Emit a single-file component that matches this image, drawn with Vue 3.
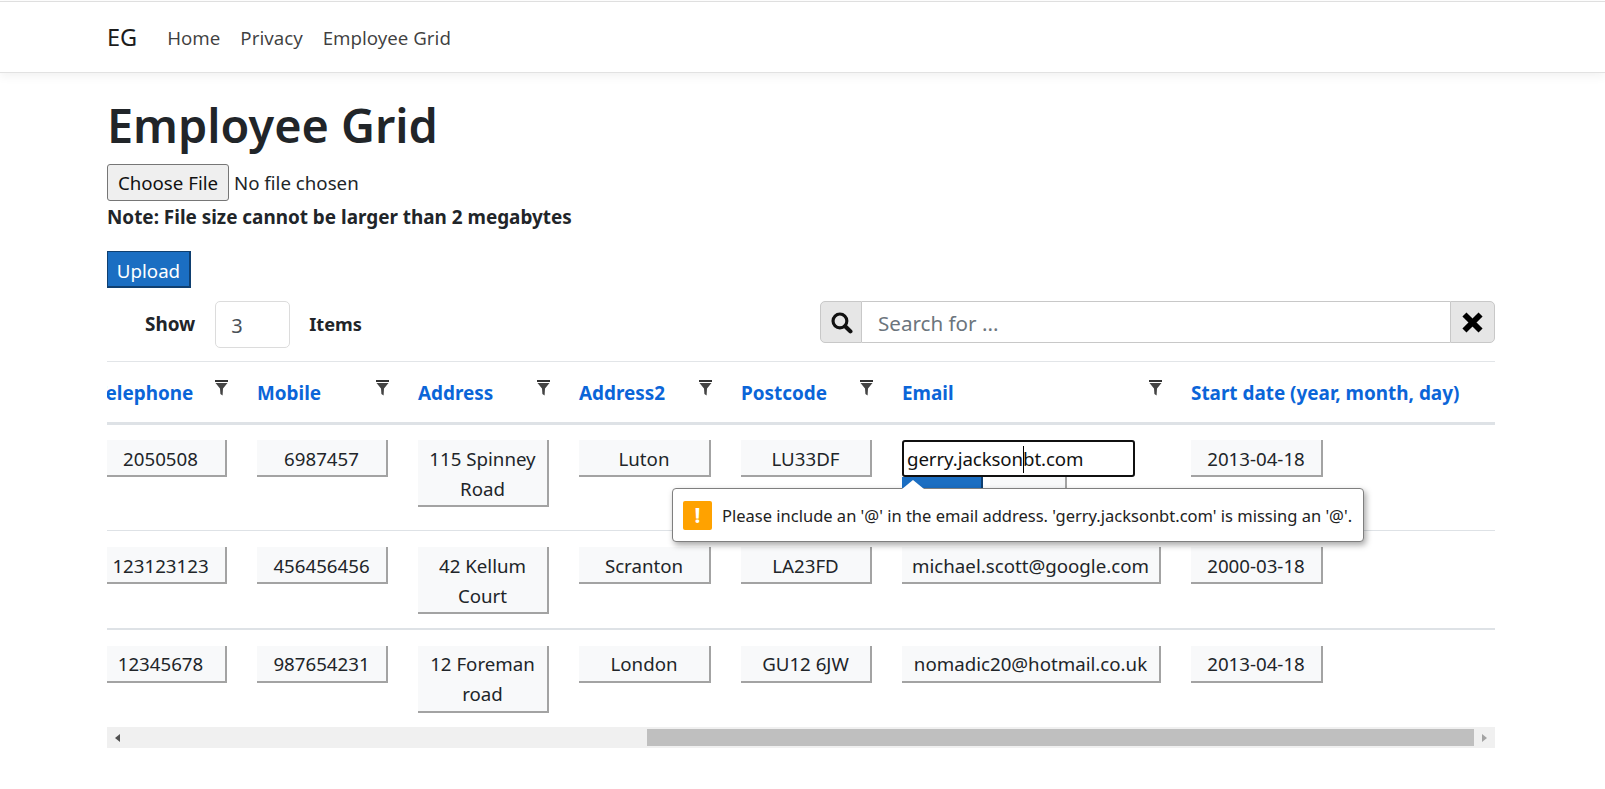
<script setup>
const columns = [
  { title: 'Telephone', width: 161, filter: true },
  { title: 'Mobile', width: 161, filter: true },
  { title: 'Address', width: 161, filter: true },
  { title: 'Address2', width: 162, filter: true },
  { title: 'Postcode', width: 161, filter: true },
  { title: 'Email', width: 289, filter: true },
  { title: 'Start date (year, month, day)', width: 319, filter: false }
]
const rows = [
  { tel: '2050508', mob: '6987457', addr: '115 Spinney Road', addr2: 'Luton', post: 'LU33DF', email: '', date: '2013-04-18', editing: true },
  { tel: '123123123', mob: '456456456', addr: '42 Kellum Court', addr2: 'Scranton', post: 'LA23FD', email: 'michael.scott@google.com', date: '2000-03-18' },
  { tel: '12345678', mob: '987654231', addr: '12 Foreman road', addr2: 'London', post: 'GU12 6JW', email: 'nomadic20@hotmail.co.uk', date: '2013-04-18' }
]
</script>

<template>
  <div class="page">
    <nav class="nav">
      <a class="brand">EG</a>
      <a class="link">Home</a>
      <a class="link">Privacy</a>
      <a class="link">Employee Grid</a>
    </nav>
    <main class="main">
      <h1 class="title">Employee Grid</h1>
      <div class="file-row">
        <span class="file-btn">Choose File</span>
        <span class="file-name">No file chosen</span>
      </div>
      <p class="note">Note: File size cannot be larger than 2 megabytes</p>
      <span class="upload">Upload</span>
      <div class="toolbar">
        <div class="show">
          <b>Show</b>
          <span class="count">3</span>
          <b class="items">Items</b>
        </div>
        <div class="search">
          <span class="addon addon-left">
            <svg width="23" height="23" viewBox="0 0 22 22"><circle cx="9.5" cy="9.5" r="6.6" fill="none" stroke="#111" stroke-width="3"/><path d="M14.5 14.5l5 5" stroke="#111" stroke-width="4" stroke-linecap="round"/></svg>
          </span>
          <span class="search-input">Search for ...</span>
          <span class="addon addon-right">
            <svg width="23" height="23" viewBox="0 0 20 20"><path d="M3 3l14 14M17 3L3 17" stroke="#000" stroke-width="5"/></svg>
          </span>
        </div>
      </div>
      <div class="grid-wrap">
        <table class="grid">
          <colgroup>
            <col v-for="c in columns" :key="c.title" :style="{ width: c.width + 'px' }">
          </colgroup>
          <thead>
            <tr>
              <th v-for="c in columns" :key="c.title">
                <div class="th-inner">
                  <span class="th-label">{{ c.title }}</span>
                  <svg v-if="c.filter" class="funnel" width="13" height="16" viewBox="0 0 13 16"><rect x="0" y="0" width="13" height="2" fill="#333"/><path d="M0.5 3h12L8 8.5 7.6 15.5 5.4 14 5 8.5z" fill="#444"/></svg>
                </div>
              </th>
            </tr>
          </thead>
          <tbody>
            <tr v-for="(r, i) in rows" :key="i" :class="'row-' + i">
              <td><div class="box">{{ r.tel }}</div></td>
              <td><div class="box">{{ r.mob }}</div></td>
              <td><div class="box">{{ r.addr }}</div></td>
              <td><div class="box">{{ r.addr2 }}</div></td>
              <td><div class="box">{{ r.post }}</div></td>
              <td>
                <template v-if="r.editing">
                  <div class="email-input">gerry.jackson<i class="caret"></i>bt.com</div>
                  <div class="edit-btns">
                    <span class="save"></span>
                    <span class="cancel"></span>
                  </div>
                </template>
                <div v-else class="box">{{ r.email }}</div>
              </td>
              <td><div class="box date">{{ r.date }}</div></td>
            </tr>
          </tbody>
        </table>
        <div class="tooltip">
          <span class="tip-arrow"></span>
          <span class="tip-icon">!</span>
          <span class="tip-text">Please include an '@' in the email address. 'gerry.jacksonbt.com' is missing an '@'.</span>
        </div>
      </div>
      <div class="scrollbar">
        <span class="arrow-left"></span>
        <div class="track"><span class="thumb"></span></div>
        <span class="arrow-right"></span>
      </div>
    </main>
  </div>
</template>

<style>
html, body { margin: 0; background: #fff; overflow: hidden; }
</style>

<style scoped>
.page {
  width: 1605px;
  height: 789px;
  overflow: hidden;
  font-family: "Noto Sans", "Open Sans", sans-serif;
  font-size: 18.7px;
  color: #212529;
  background: #fff;
}
.nav {
  height: 70px;
  margin-top: 1px;
  border-top: 1px solid #dfdfdf;
  border-bottom: 1px solid #e2e2e2;
  box-shadow: 0 3px 10px rgba(0, 0, 0, .06);
  display: flex;
  align-items: center;
  padding-left: 107px;
  box-sizing: content-box;
}
.brand {
  font-size: 23.5px;
  color: #1c1c1c;
  margin-right: 30px;
}
.link {
  color: rgba(0, 0, 0, .75);
  margin-right: 20px;
}
.main {
  width: 1388px;
  margin-left: 107px;
}
.title {
  margin: 0;
  padding-top: 17px;
  font-size: 46.8px;
  font-weight: 600;
  line-height: 70px;
  height: 74px;
  color: #212529;
}
.file-row {
  display: flex;
  align-items: center;
  height: 37px;
}
.file-btn {
  box-sizing: border-box;
  width: 122px;
  height: 37px;
  line-height: 36px;
  text-align: center;
  background: #efefef;
  border: 1px solid #767676;
  border-radius: 3px;
  color: #111;
}
.file-name {
  margin-left: 5px;
  padding-bottom: 1px;
}
.note {
  margin: 2px 0 0;
  height: 48px;
  line-height: 28px;
  font-weight: 700;
  font-size: 18.9px;
  color: #212529;
}
.upload {
  display: block;
  box-sizing: border-box;
  width: 84px;
  height: 37px;
  line-height: 37px;
  text-align: center;
  color: #fff;
  background: #1b6ec2;
  border: solid #0f3f70;
  border-width: 1px 2px 2px 1px;
}
.toolbar {
  display: flex;
  justify-content: space-between;
  align-items: flex-start;
  margin-top: 13px;
  height: 60px;
}
.show {
  display: flex;
  align-items: center;
  height: 47px;
  padding-left: 38px;
  font-size: 18.9px;
}
.show b {
  font-weight: 700;
  color: #212529;
  padding-bottom: 2px;
}
.show .items {
  font-size: 18.2px;
}
.count {
  box-sizing: border-box;
  width: 75px;
  height: 47px;
  line-height: 47px;
  margin: 0 19px 0 20px;
  padding-left: 15px;
  border: 1px solid #dcdcdc;
  border-radius: 5px;
  font-size: 20px;
  color: #495057;
}
.search {
  width: 675px;
  height: 42px;
  display: flex;
  box-sizing: border-box;
}
.addon {
  display: flex;
  align-items: center;
  justify-content: center;
  box-sizing: border-box;
  background: #e6e6e6;
  border: 1px solid #c8c8c8;
}
.addon-left {
  width: 42px;
  border-radius: 5px 0 0 5px;
}
.addon-right {
  width: 45px;
  border-radius: 0 5px 5px 0;
}
.search-input {
  flex: 1;
  box-sizing: border-box;
  line-height: 42px;
  padding-left: 16px;
  border-top: 1px solid #c8c8c8;
  border-bottom: 1px solid #c8c8c8;
  color: #6c757d;
  font-size: 20.6px;
}
.grid-wrap {
  position: relative;
  width: 1388px;
  height: 366px;
  overflow: hidden;
}
.grid {
  table-layout: fixed;
  width: 1414px;
  margin-left: -26px;
  border-collapse: separate;
  border-spacing: 0;
}
.grid th {
  height: 64px;
  box-sizing: border-box;
  padding: 19px 14px 0 15px;
  vertical-align: top;
  text-align: left;
  border-top: 1px solid #e2e5e8;
  border-bottom: 3px solid #dee2e6;
}
.th-inner {
  display: flex;
  justify-content: space-between;
  align-items: flex-start;
}
.th-label {
  color: #0b65d8;
  font-size: 18.9px;
  font-weight: 700;
  line-height: 24px;
  white-space: nowrap;
}
.funnel {
  margin-top: -1px;
  flex: none;
}
.grid td {
  padding: 15px 15px 16px;
  vertical-align: top;
  border-bottom: 1px solid #dee2e6;
}
.grid .row-1 td {
  padding: 16px 15px 14px;
  border-bottom-width: 2px;
}
.grid .row-2 td {
  padding-top: 16px;
  border-bottom: 0;
}
.box {
  box-sizing: border-box;
  padding: 4px 6px 1px;
  line-height: 30px;
  text-align: center;
  background: #f8f9fa;
  border: solid #a3a3a3;
  border-width: 0 2px 2px 0;
  color: #212529;
}
.grid .row-2 .box {
  padding: 3px 6px 2px;
}
.box.date { width: 132px; }
.email-input {
  box-sizing: border-box;
  width: 233px;
  height: 37px;
  line-height: 33px;
  padding-left: 3px;
  border: 2px solid #101010;
  border-radius: 3px;
  background: #fff;
  color: #111;
  white-space: nowrap;
  letter-spacing: -0.1px;
}
.caret {
  display: inline-block;
  width: 1px;
  height: 27px;
  margin-right: -1px;
  background: #000;
  vertical-align: -7px;
}
.edit-btns {
  display: flex;
  gap: 7px;
  height: 37px;
}
.save {
  width: 81px;
  background: #1b6ec2;
  border-right: 2px solid #0f3f70;
  box-sizing: border-box;
}
.cancel {
  width: 77px;
  background: #f8f9fa;
  border-right: 2px solid #a3a3a3;
  box-sizing: border-box;
}
.tooltip {
  position: absolute;
  left: 565px;
  top: 127px;
  box-sizing: border-box;
  width: 692px;
  height: 54px;
  display: flex;
  align-items: center;
  background: #fff;
  border: 1px solid #7f7f7f;
  border-radius: 4px;
  box-shadow: 2px 3px 6px rgba(0, 0, 0, .35);
}
.tip-arrow {
  position: absolute;
  left: 229px;
  top: -9px;
  width: 0;
  height: 0;
  border-left: 11px solid transparent;
  border-right: 11px solid transparent;
  border-bottom: 9px solid #fff;
}
.tip-icon {
  width: 29px;
  height: 29px;
  margin-left: 10px;
  border-radius: 2px;
  background: #ffa200;
  color: #fff;
  font-weight: 700;
  font-size: 21px;
  line-height: 29px;
  text-align: center;
}
.tip-text {
  margin-left: 10px;
  font-size: 16.5px;
  color: #222;
  white-space: nowrap;
}
.scrollbar {
  display: flex;
  align-items: center;
  width: 1388px;
  height: 21px;
  background: #f0f0f0;
}
.arrow-left {
  width: 0;
  height: 0;
  margin-left: 8px;
  border-top: 4.5px solid transparent;
  border-bottom: 4.5px solid transparent;
  border-right: 5px solid #505050;
}
.track {
  flex: 1;
  height: 17px;
  margin-right: 8px;
  display: flex;
  justify-content: flex-end;
}
.thumb {
  width: 827px;
  height: 17px;
  background: #bfbfbf;
}
.arrow-right {
  width: 0;
  height: 0;
  margin-right: 8px;
  border-top: 4.5px solid transparent;
  border-bottom: 4.5px solid transparent;
  border-left: 5px solid #a3a3a3;
}
</style>
